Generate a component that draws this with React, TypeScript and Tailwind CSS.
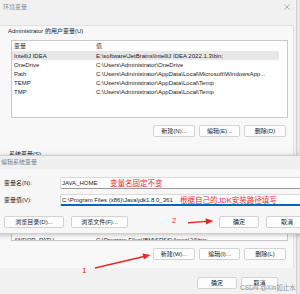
import React from "react";

const userRows: [string, string][] = [
  ["IntelliJ IDEA", "E:\\software\\JetBrains\\IntelliJ IDEA 2022.1.3\\bin;"],
  ["OneDrive", "C:\\Users\\Administrator\\OneDrive"],
  ["Path", "C:\\Users\\Administrator\\AppData\\Local\\Microsoft\\WindowsApp..."],
  ["TEMP", "C:\\Users\\Administrator\\AppData\\Local\\Temp"],
  ["TMP", "C:\\Users\\Administrator\\AppData\\Local\\Temp"],
];

function Btn({ label, w }: { label: string; w: string }) {
  return (
    <div
      className={`${w} h-[12px] flex items-center justify-center bg-[#fdfdfd] border border-[#d3d3d3] rounded-[2px] text-[6px] leading-[8px] text-[#1b1b1b] whitespace-nowrap`}
    >
      <span>{label}</span>
    </div>
  );
}

function Row({ k, v, hl }: { k: string; v: string; hl?: boolean }) {
  return (
    <div
      className={`h-[9px] shrink-0 mr-[8px] flex items-center text-[6px] leading-[8px] text-[#1b1b1b] whitespace-nowrap overflow-hidden ${
        hl ? "bg-[#e7e7e7]" : ""
      }`}
    >
      <div className="w-[84px] pl-[2px] shrink-0 overflow-hidden">
        <span>{k}</span>
      </div>
      <div className="overflow-hidden">
        <span>{v}</span>
      </div>
    </div>
  );
}

export default function App() {
  return (
    <div className="relative w-[300px] h-[294px] overflow-hidden bg-[#e6e6e6] font-['Liberation_Sans','Noto_Sans_CJK_SC',sans-serif]">
      {/* Environment variables window */}
      <div className="w-[297px] h-full bg-[#f1f1f1] border-r border-[#d4d4d4] flex flex-col">
        <div className="h-[22px] shrink-0 flex items-start justify-between pt-[3px] pl-[3px] pr-[6px]">
          <span className="text-[6px] leading-[8px] text-[#8c8c8c]">环境变量</span>
          <svg width="6" height="6" viewBox="0 0 6 6" className="mt-[1px]">
            <path d="M0.5 0.5L5.5 5.5M5.5 0.5L0.5 5.5" stroke="#9a9a9a" strokeWidth="0.7" />
          </svg>
        </div>
        <div className="mt-[3px] mr-[2px] bg-[#f8f8f8] border-t border-r border-[#e2e2e2] flex flex-col pb-[8px]">
          <div className="mt-[1px] pl-[8px] text-[6px] leading-[8px] text-[#1b1b1b]">
            <span>Administrator 的用户变量(U)</span>
          </div>
          {/* user variables list */}
          <div className="mt-[5px] ml-[11px] w-[277px] h-[78px] bg-white border border-[#c9c9c9] overflow-hidden flex flex-col">
            <div className="h-[10px] shrink-0 flex items-center text-[6px] leading-[8px] text-[#333]">
              <div className="w-[84px] pl-[2px]">
                <span>变量</span>
              </div>
              <span>值</span>
            </div>
            {userRows.map(([k, v], i) => (
              <Row key={i} k={k} v={v} hl={i === 0} />
            ))}
          </div>
          <div className="mt-[7px] ml-[153px] flex gap-[4px]">
            <Btn label="新建(N)..." w="w-[42px]" />
            <Btn label="编辑(E)..." w="w-[41px]" />
            <Btn label="删除(D)" w="w-[42px]" />
          </div>
          <div className="mt-[13px] pl-[9px] text-[6px] leading-[8px] text-[#1b1b1b]">
            <span>系统变量(S)</span>
          </div>
          {/* system variables list (mostly hidden under the dialog) */}
          <div className="mt-[1px] ml-[11px] w-[277px] h-[82px] bg-white border border-[#c9c9c9] overflow-hidden flex flex-col">
            <div className="h-[75px] shrink-0" />
            <Row k="ANDOR_PATH" v="C:\Program Files\IBM\SPSS\Amos\24\bin;" />
          </div>
          <div className="mt-[7px] ml-[153px] flex gap-[4px]">
            <Btn label="新建(W)..." w="w-[42px]" />
            <Btn label="编辑(I)..." w="w-[41px]" />
            <Btn label="删除(L)" w="w-[42px]" />
          </div>
        </div>
        <div className="mt-[9px] ml-[197px] flex gap-[4px]">
          <Btn label="确定" w="w-[40px]" />
          <Btn label="取消" w="w-[37px]" />
        </div>
      </div>

      {/* Edit system variable dialog (overlay) */}
      <div className="absolute left-[-4px] right-[-12px] top-[155px] h-[79px] bg-[#f7f7f7] border border-[#cfcfcf] shadow-[0_1px_5px_rgba(0,0,0,0.25)] flex flex-col">
        <div className="h-[13px] shrink-0 bg-[#f0f0f0] pl-[4px] pt-[2px] text-[6px] leading-[8px] text-[#7d7d7d]">
          <span>编辑系统变量</span>
        </div>
        <div className="pt-[8px] flex flex-col">
          <div className="flex items-center h-[12px]">
            <div className="w-[63px] pl-[7px] shrink-0 text-[6px] leading-[8px] text-[#1b1b1b]">
              <span>变量名(N):</span>
            </div>
            <div className="flex-1 h-[12px] bg-white border border-[#dadada] border-b-[#9a9a9a] rounded-[2px] pl-[1px] flex items-center text-[6px] leading-[8px] text-[#1b1b1b]">
              <span>JAVA_HOME</span>
            </div>
          </div>
          <div className="mt-[5px] flex items-center h-[12px]">
            <div className="w-[63px] pl-[7px] shrink-0 text-[6px] leading-[8px] text-[#1b1b1b]">
              <span>变量值(V):</span>
            </div>
            <div className="flex-1 h-[12px] bg-white border border-[#dadada] border-b-2 border-b-[#0067c0] rounded-[2px] pl-[1px] flex items-center text-[6px] leading-[8px] text-[#1b1b1b] whitespace-nowrap">
              <span>C:\Program Files (x86)\Java\jdk1.8.0_361</span>
            </div>
          </div>
          <div className="mt-[10px] pl-[7px] flex items-center">
            <div className="flex gap-[7px]">
              <Btn label="浏览目录(D)..." w="w-[60px]" />
              <Btn label="浏览文件(F)..." w="w-[57px]" />
            </div>
            <div className="ml-[91px] flex gap-[7px]">
              <Btn label="确定" w="w-[40px]" />
              <Btn label="取消" w="w-[42px]" />
            </div>
          </div>
        </div>
      </div>

      {/* Annotations */}
      <div className="absolute left-[110px] top-[179px] text-[7.5px] leading-[9px] text-[#e8282b] whitespace-nowrap">
        <span>变量名固定不变</span>
      </div>
      <div className="absolute left-[180px] top-[196px] text-[7.5px] leading-[9px] text-[#e8282b] whitespace-nowrap">
        <span>根据自己的JDK安装路径填写</span>
      </div>
      <div className="absolute left-[172px] top-[216px] text-[7.5px] leading-[9px] text-[#e8282b]">
        <span>2</span>
      </div>
      <div className="absolute left-[82px] top-[266px] text-[8px] leading-[10px] text-[#e8282b]">
        <span>1</span>
      </div>
      <svg className="absolute left-0 top-0 pointer-events-none" width="300" height="294" viewBox="0 0 300 294">
        <line x1="188" y1="222.8" x2="207" y2="221.4" stroke="#e8282b" strokeWidth="1.4" />
        <polygon points="213.5,221 205.6,218.3 206,224.5" fill="#e8282b" />
        <line x1="95" y1="268" x2="144" y2="256.5" stroke="#e8282b" strokeWidth="1.4" />
        <polygon points="150.5,255 142.4,253.6 143.9,259.6" fill="#e8282b" />
      </svg>
      <div className="absolute left-[240px] top-[284px] text-[6.5px] leading-[8px] text-[#8f8f8f] whitespace-nowrap [text-shadow:0_0_1px_#fff]">
        <span>CSDN @Xin如止水</span>
      </div>
    </div>
  );
}
